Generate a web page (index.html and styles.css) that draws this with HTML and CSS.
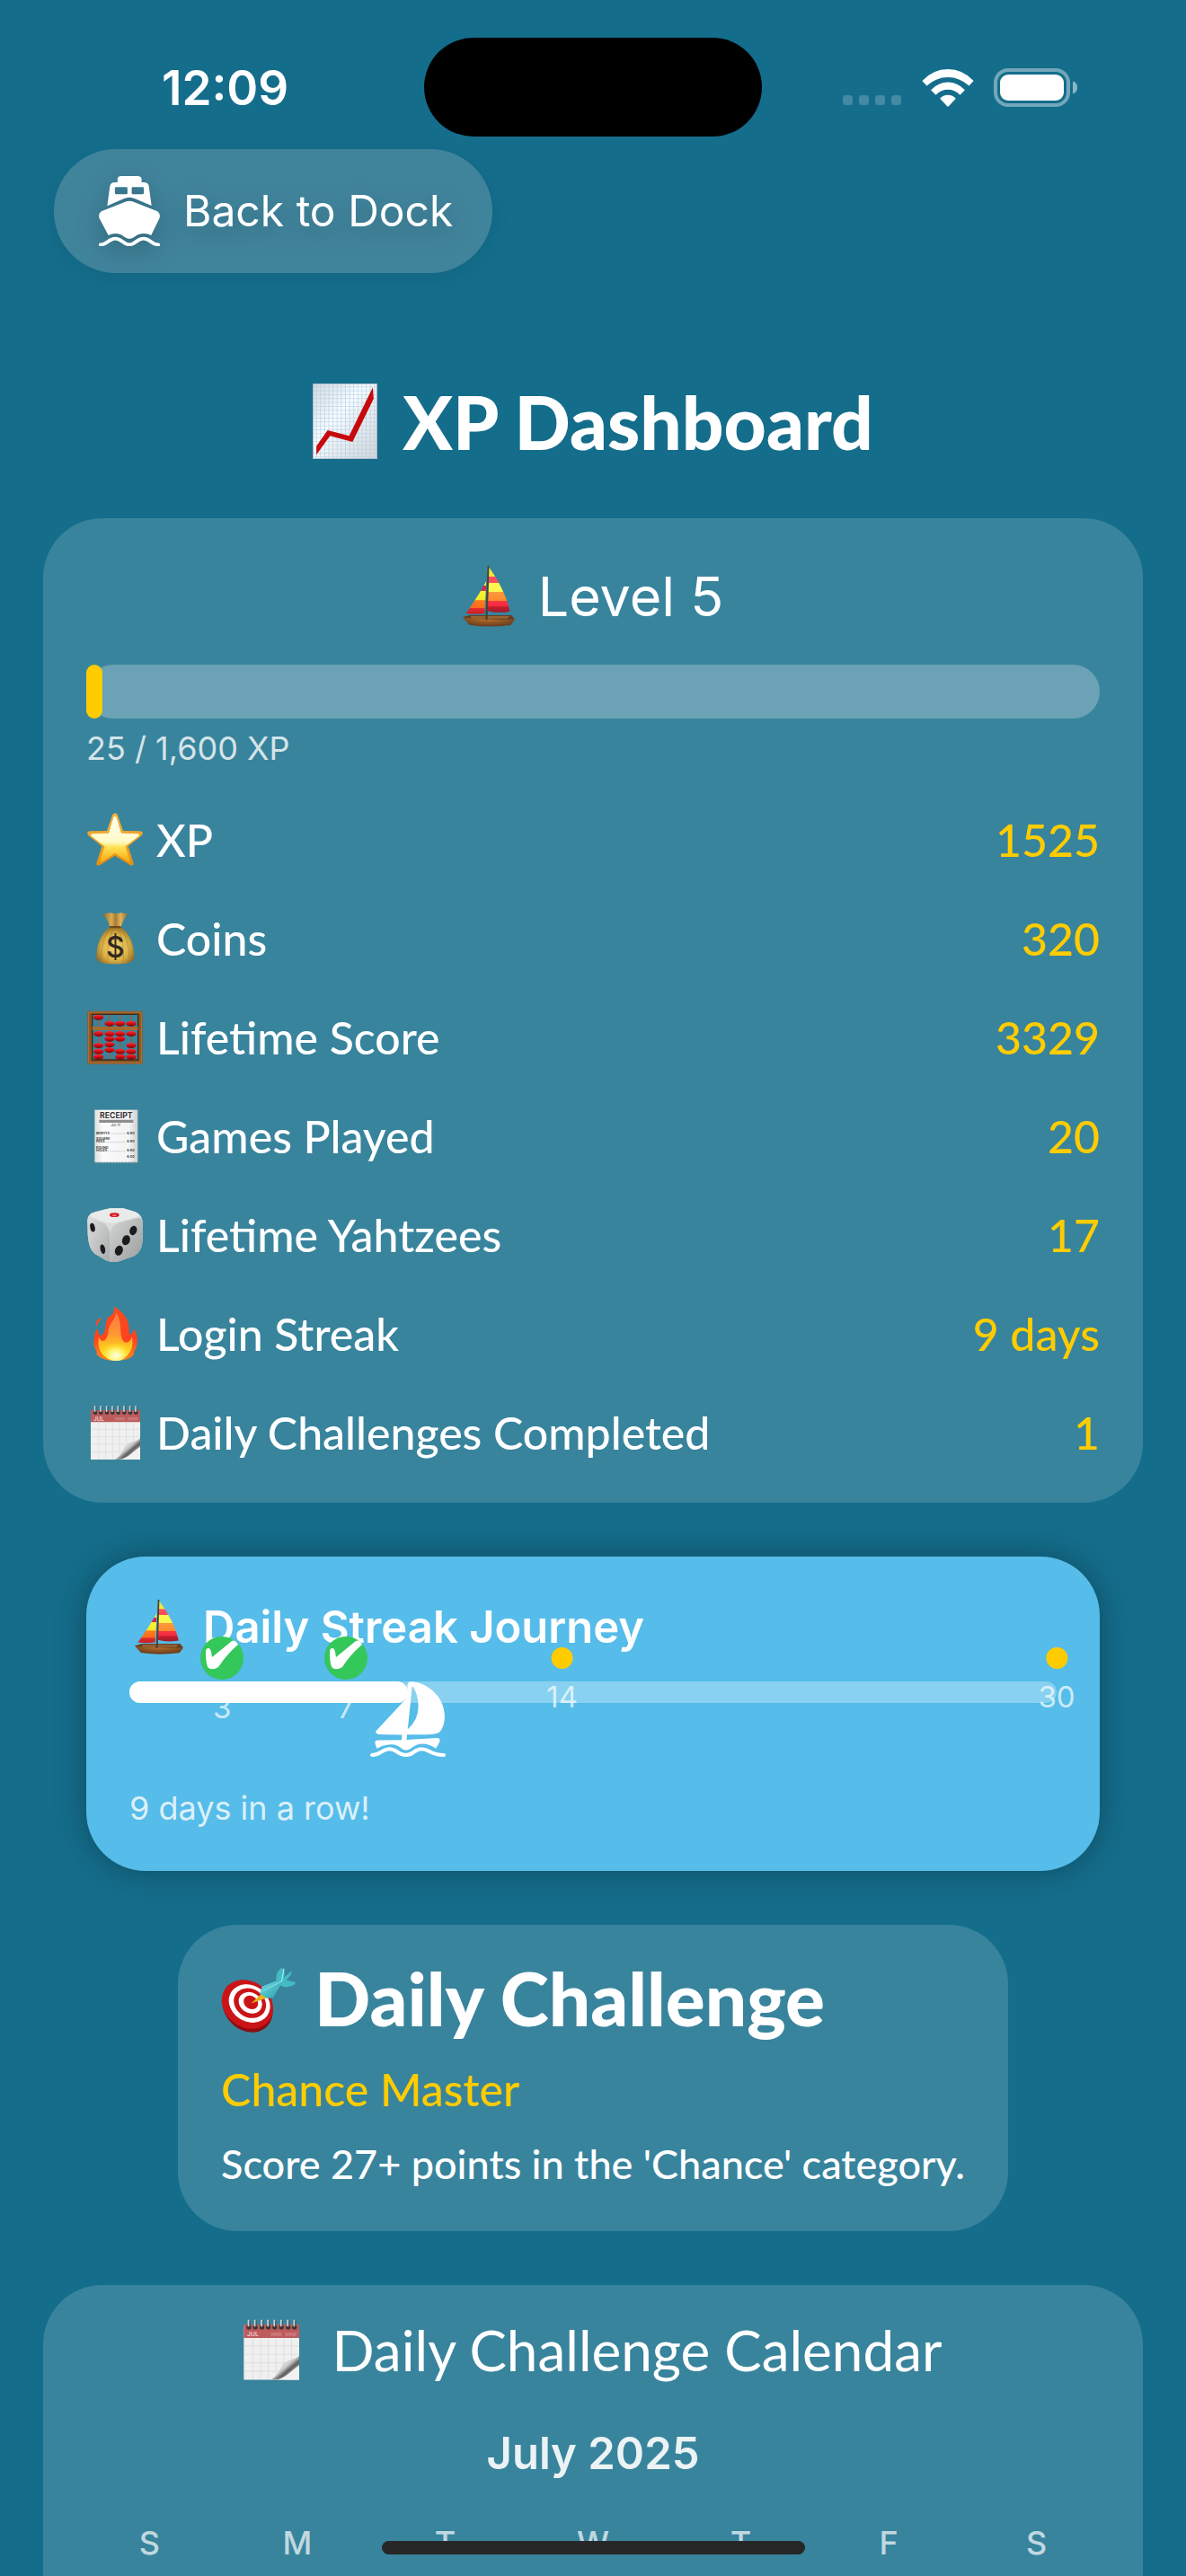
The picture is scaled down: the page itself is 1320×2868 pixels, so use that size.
FILE: index.html
```html
<!DOCTYPE html>
<html lang="en">
<head>
<meta charset="utf-8">
<meta name="viewport" content="width=device-width, initial-scale=1">
<title>XP Dashboard</title>
<link rel="stylesheet" href="styles.css">
</head>
<body>
<svg class="sprite" aria-hidden="true">
  <defs>
    <linearGradient id="sailA" x1="0" y1="0" x2="0" y2="1">
      <stop offset="0" stop-color="#f3e83a"/><stop offset=".2" stop-color="#f3e83a"/>
      <stop offset=".21" stop-color="#fb4d5c"/><stop offset=".34" stop-color="#fb4d5c"/>
      <stop offset=".35" stop-color="#fdf64c"/><stop offset=".54" stop-color="#fdf64c"/>
      <stop offset=".55" stop-color="#fd9a3b"/><stop offset=".74" stop-color="#fd8a2f"/>
      <stop offset=".75" stop-color="#fb3446"/><stop offset=".86" stop-color="#f52a3e"/>
      <stop offset=".87" stop-color="#c9202f"/><stop offset="1" stop-color="#9c1a28"/>
    </linearGradient>
    <linearGradient id="sailB" x1="0" y1="0" x2="0" y2="1">
      <stop offset="0" stop-color="#f3e83a"/><stop offset=".14" stop-color="#f3e83a"/>
      <stop offset=".15" stop-color="#d62743"/><stop offset=".29" stop-color="#d62743"/>
      <stop offset=".3" stop-color="#fbf52c"/><stop offset=".58" stop-color="#f5e92a"/>
      <stop offset=".59" stop-color="#fd7a1d"/><stop offset=".82" stop-color="#fb6a1b"/>
      <stop offset=".83" stop-color="#e22a2e"/><stop offset="1" stop-color="#c41f28"/>
    </linearGradient>
    <radialGradient id="hull" cx=".5" cy=".3" r=".6">
      <stop offset="0" stop-color="#bd7428"/><stop offset="1" stop-color="#6f4120"/>
    </radialGradient>
    <linearGradient id="star" x1="0" y1="0" x2="0" y2="1">
      <stop offset="0" stop-color="#fffef0"/><stop offset=".55" stop-color="#fffbc8"/>
      <stop offset=".68" stop-color="#ffe052"/><stop offset="1" stop-color="#f5a80f"/>
    </linearGradient>
    <linearGradient id="starEdge" x1="0" y1="0" x2="0" y2="1">
      <stop offset="0" stop-color="#f6b23c"/><stop offset="1" stop-color="#e38f12"/>
    </linearGradient>
    <radialGradient id="bag" cx=".5" cy=".55" r=".6">
      <stop offset="0" stop-color="#f3d672"/><stop offset=".6" stop-color="#d9b146"/><stop offset="1" stop-color="#8a6120"/>
    </radialGradient>
    <linearGradient id="bagTop" x1="0" y1="0" x2="1" y2="0">
      <stop offset="0" stop-color="#8f6829"/><stop offset=".35" stop-color="#d9ae55"/>
      <stop offset=".5" stop-color="#a87a33"/><stop offset=".7" stop-color="#dcb45c"/><stop offset="1" stop-color="#8f6829"/>
    </linearGradient>
    <linearGradient id="bead" x1="0" y1="0" x2="0" y2="1">
      <stop offset="0" stop-color="#f5333a"/><stop offset=".5" stop-color="#d60b12"/><stop offset="1" stop-color="#6e0508"/>
    </linearGradient>
    <linearGradient id="paper" x1="0" y1="0" x2="1" y2="0">
      <stop offset="0" stop-color="#dedede"/><stop offset=".2" stop-color="#fbfbfb"/>
      <stop offset=".8" stop-color="#f3f3f3"/><stop offset="1" stop-color="#cfcfcf"/>
    </linearGradient>
    <linearGradient id="dieL" x1="0" y1="0" x2="1" y2="1">
      <stop offset="0" stop-color="#dcdddd"/><stop offset="1" stop-color="#a9abac"/>
    </linearGradient>
    <linearGradient id="dieR" x1="0" y1="0" x2="1" y2="1">
      <stop offset="0" stop-color="#d3d5d5"/><stop offset="1" stop-color="#9b9d9e"/>
    </linearGradient>
    <linearGradient id="flame" x1="0" y1="0" x2="0" y2="1">
      <stop offset="0" stop-color="#fb4a1f"/><stop offset=".6" stop-color="#fd4420"/><stop offset="1" stop-color="#ff8a1c"/>
    </linearGradient>
    <linearGradient id="flameIn" x1="0" y1="0" x2="0" y2="1">
      <stop offset="0" stop-color="#fd7b3c"/><stop offset=".45" stop-color="#ff9634"/>
      <stop offset=".7" stop-color="#ffc41f"/><stop offset="1" stop-color="#ffe92f"/>
    </linearGradient>
    <radialGradient id="flameCore" cx=".5" cy=".75" r=".6">
      <stop offset="0" stop-color="#fffde0"/><stop offset=".5" stop-color="#fff36a"/><stop offset="1" stop-color="#ffe02a" stop-opacity="0"/>
    </radialGradient>
    <linearGradient id="curl" x1="0" y1="0" x2="1" y2="1">
      <stop offset=".25" stop-color="#f4f4f4"/><stop offset=".5" stop-color="#c9c9c9"/><stop offset=".62" stop-color="#5c5c5c"/><stop offset=".8" stop-color="#cfcfcf"/>
    </linearGradient>
    <linearGradient id="chart" x1="0" y1="0" x2="1" y2="1">
      <stop offset="0" stop-color="#d3d8de"/><stop offset=".4" stop-color="#fafcfe"/><stop offset="1" stop-color="#d3d3d5"/>
    </linearGradient>
    <pattern id="grid" width="10" height="13" patternUnits="userSpaceOnUse">
      <path d="M0 1H10M1 0V13" stroke="#a8cdea" stroke-width="2" fill="none" opacity=".75"/>
    </pattern>
    <linearGradient id="flight" x1="0" y1="0" x2="1" y2="1">
      <stop offset="0" stop-color="#76e0e6"/><stop offset="1" stop-color="#2b9fae"/>
    </linearGradient>
  </defs>
  <symbol id="boat" viewBox="478 690 126 204" preserveAspectRatio="none">
    <path d="M541 694C560 730 583 785 592 842Q562 850 538 840Z" fill="url(#sailA)"/>
    <path d="M535 740C522 775 503 815 486 849Q508 854 531 849Z" fill="url(#sailB)"/>
    <path d="M478 862L496 855H596L604 870 594 888Q540 898 494 887Z" fill="url(#hull)"/>
    <path d="M478 862L496 855H596L603 868Q540 872 478 862Z" fill="#5f3d22"/>
    <path d="M496 858H592L585 866H500Z" fill="#9a6330"/>
    <path d="M538 690H542L538 871H533Z" fill="#46423a"/>
  </symbol>
</svg>

<div class="app">
  <header class="status">
    <time class="clock">12:09</time>
    <div class="island"></div>
    <div class="signals">
      <svg class="cell" viewBox="0 0 66 12" aria-hidden="true"><g fill="#fff" opacity=".2"><rect width="11" height="11" rx="3.5"/><rect x="18" width="11" height="11" rx="3.5"/><rect x="36" width="11" height="11" rx="3.5"/><rect x="54" width="11" height="11" rx="3.5"/></g></svg>
      <svg class="wifi" viewBox="866 225 138 127" preserveAspectRatio="none" aria-hidden="true"><path fill="#fff" d="M867 264Q896 225 935 225T1003 264L991 281Q966 252 935 252T879 281ZM890 295Q910 269 935 269T980 295L967 312Q953 294 935 294T903 312ZM914 324Q922 312 935 312T956 324L937 350Q935 352 933 350Z"/></svg>
      <svg class="battery" viewBox="0 0 94 44" aria-hidden="true"><rect x="2" y="2" width="81" height="39" rx="14" fill="none" stroke="#fff" stroke-opacity=".4" stroke-width="4"/><rect x="7" y="7" width="71" height="29" rx="9" fill="#fff"/><path d="M88 14.500Q93 16 93 21.500T88 28.500Z" fill="#fff" fill-opacity=".5"/></svg>
    </div>
  </header>

  <main class="content">
    <button class="back" type="button">
      <svg class="ferry" viewBox="261 588 160 234" preserveAspectRatio="none" aria-hidden="true">
        <path fill="#fff" fill-rule="evenodd" d="M310 609V598Q311 588 320 588H362Q372 588 373 598V609H380Q391 610 392 622L399 687L356 664Q341 655 326 664L283 688L290 622Q292 609 303 609ZM307 625Q303 625 303 629V645Q303 649 307 649H332Q336 649 336 645V629Q336 625 332 625ZM351 625Q347 625 347 629V645Q347 649 351 649H375Q379 649 379 645V629Q379 625 375 625Z"/>
        <path fill="#fff" d="M333 673Q341 669 349 673L413 705Q423 712 420 728L398 786C388 778 368 776 356 790Q341 806 326 790C314 776 298 778 286 786L262 728Q259 712 269 705Z"/>
        <path fill="none" stroke="#fff" stroke-width="11" stroke-linecap="round" d="M266 817C284 817 286 797 304 797S324 817 341 817S360 797 378 797S398 817 416 817"/>
      </svg>
      <span>Back to Dock</span>
    </button>

    <h1 class="title">
      <svg class="title-icon" viewBox="92 81 156 252" preserveAspectRatio="none" aria-hidden="true">
        <rect x="92" y="81" width="156" height="252" fill="url(#chart)"/><rect x="92" y="81" width="156" height="252" fill="url(#grid)"/>
        <rect x="93" y="82" width="154" height="250" fill="none" stroke="#aab4bd" stroke-width="2"/>
        <path d="M101 290L128 237L180 256L237 94L239 132L188 276L134 256L101 319Z" fill="#c60a0c"/>
      </svg>
      <span>XP Dashboard</span>
    </h1>

    <section class="card stats">
      <h2 class="level"><svg class="level-icon" aria-hidden="true"><use href="#boat"/></svg><span>Level 5</span></h2>
      <div class="xp-bar" role="progressbar" aria-label="XP" aria-valuemin="0" aria-valuemax="1600" aria-valuenow="25"><div class="xp-fill" style="width: 1.5625%"></div></div>
      <p class="caption">25 / 1,600 XP</p>
      <dl class="rows">
        <div class="row">
          <dt><svg class="emoji" viewBox="0 0 192 180" aria-hidden="true"><path d="M88 6Q96-5 104 6L123 60 180 61Q194 63 185 76L140 112 158 168Q159 180 147 175L96 143 45 175Q33 180 34 168L52 112 7 76Q-2 63 12 61L69 60Z" fill="url(#starEdge)"/><path d="M91 16Q96 8 101 16L117 68 172 70Q181 72 174 79L131 112 146 160Q145 167 138 163L96 134 54 163Q47 167 46 160L61 112 18 79Q11 72 20 70L75 68Z" fill="url(#star)"/></svg>XP</dt>
          <dd>1525</dd>
        </div>
        <div class="row">
          <dt><svg class="emoji" viewBox="18 44 192 180" aria-hidden="true"><path d="M98 96C76 108 54 140 52 190C50 214 74 219 115 219S180 214 178 190C176 140 154 108 132 96Z" fill="url(#bag)"/><path d="M98 100C80 122 70 150 68 200M132 100C150 122 160 150 162 200M108 100Q86 150 90 210M124 100Q146 150 142 210" fill="none" stroke="#a57c2c" stroke-width="3" opacity=".55"/><path d="M73 52L96 48Q116 52 134 48L158 52Q142 66 134 96H97Q90 68 73 52Z" fill="url(#bagTop)"/><rect x="96" y="92" width="38" height="7" rx="3" fill="#6e4a1a"/><text x="115" y="196" text-anchor="middle" font-family="Inter, sans-serif" font-size="96" font-weight="500" fill="#33291e">$</text></svg>Coins</dt>
          <dd>320</dd>
        </div>
        <div class="row">
          <dt><svg class="emoji" viewBox="20 376 192 180" aria-hidden="true"><path d="M61 388V545M98 388V545M133 388V545M170 388V545" stroke="#a25a3a" stroke-width="4"/><path d="M24 378H208V555H24ZM40 389V541H193V389Z" fill="#8d5624" fill-rule="evenodd"/><path d="M28 382H204V551H28Z" fill="none" stroke="#b0763a" stroke-width="3"/><path d="M40 389H193V541H40Z" fill="none" stroke="#3f2a18" stroke-width="4"/><path d="M40 430H193V442H40Z" fill="#a56c30"/><g fill="url(#bead)"><ellipse cx="61" cy="399" rx="17" ry="9"/><ellipse cx="98" cy="420" rx="17" ry="9"/><ellipse cx="133" cy="420" rx="17" ry="9"/><ellipse cx="170" cy="420" rx="17" ry="9"/><ellipse cx="61" cy="454" rx="17" ry="9"/><ellipse cx="98" cy="454" rx="17" ry="9"/><ellipse cx="133" cy="454" rx="17" ry="9"/><ellipse cx="170" cy="454" rx="17" ry="9"/><ellipse cx="98" cy="471" rx="17" ry="9"/><ellipse cx="133" cy="471" rx="17" ry="9"/><ellipse cx="61" cy="493" rx="17" ry="9"/><ellipse cx="98" cy="490" rx="17" ry="9"/><ellipse cx="170" cy="493" rx="17" ry="9"/><ellipse cx="98" cy="508" rx="17" ry="9"/><ellipse cx="61" cy="513" rx="17" ry="9"/><ellipse cx="133" cy="513" rx="17" ry="9"/><ellipse cx="170" cy="513" rx="17" ry="9"/><ellipse cx="61" cy="531" rx="17" ry="9"/><ellipse cx="133" cy="531" rx="17" ry="9"/><ellipse cx="170" cy="531" rx="17" ry="9"/></g></svg>Lifetime Score</dt>
          <dd>3329</dd>
        </div>
        <div class="row">
          <dt><svg class="emoji" viewBox="20 31 192 180" aria-hidden="true"><rect x="48" y="33" width="144" height="176" fill="url(#paper)"/><text x="120" y="62" text-anchor="middle" font-family="Inter, sans-serif" font-size="26" font-weight="700" fill="#333">RECEIPT</text><path d="M63 66H177V76H63Z" fill="#8d8d8d"/><text x="118" y="89" text-anchor="middle" font-family="Inter, sans-serif" font-size="10" font-weight="600" fill="#555">JUL 17</text><g font-family="Inter, sans-serif" font-size="11" font-weight="700" fill="#444"><text x="53" y="114">MISFITS</text><text x="156" y="114">6.90</text><text x="53" y="132">SQUARE</text><text x="53" y="143">PEGS</text><text x="156" y="143">6.90</text><text x="53" y="162">ROUND</text><text x="53" y="173">HOLES</text><text x="156" y="173">6.90</text><text x="156" y="194">6.00</text></g><path d="M104 112H152M88 141H152M92 171H152" stroke="#aaa" stroke-width="2" stroke-dasharray="3 2"/><path d="M48 208H192" stroke="#777" stroke-width="2" stroke-dasharray="6 4"/></svg>Games Played</dt>
          <dd>20</dd>
        </div>
        <div class="row">
          <dt><svg class="emoji" viewBox="20 362 192 180" aria-hidden="true"><path d="M24 400Q26 380 50 374L100 363H144L184 375Q206 384 208 408V470Q206 508 180 522L130 540Q104 545 84 536L48 514Q28 500 25 450Z" fill="#d9dbdb"/><path d="M24 400Q30 394 60 404Q94 412 98 450V540Q88 538 48 514Q28 500 25 450Z" fill="url(#dieL)"/><path d="M98 450Q100 420 134 410L190 396Q208 392 208 408V470Q206 508 180 522L130 540Q112 544 98 541Z" fill="url(#dieR)"/><path d="M30 388Q40 376 100 363H144L184 375Q200 384 196 390Q150 404 110 412Q90 414 60 402Z" fill="#e9ebeb"/><ellipse cx="114" cy="385" rx="16" ry="7" fill="#d31a1c"/><ellipse cx="114" cy="387" rx="7" ry="3" fill="#f77"/><g fill="#1c1c1d"><ellipse cx="41" cy="427" rx="8" ry="15" transform="rotate(-12 41 427)"/><ellipse cx="75" cy="499" rx="8" ry="16" transform="rotate(-12 75 499)"/><ellipse cx="177" cy="437" rx="12" ry="16" transform="rotate(20 177 437)"/><ellipse cx="153" cy="469" rx="13" ry="17" transform="rotate(20 153 469)"/><ellipse cx="129" cy="504" rx="13" ry="17" transform="rotate(20 129 504)"/></g></svg>Lifetime Yahtzees</dt>
          <dd>17</dd>
        </div>
        <div class="row">
          <dt><svg class="emoji" viewBox="20 693 192 180" aria-hidden="true"><path d="M113 693C142 708 164 735 163 768C162 788 172 796 179 765C190 780 194 805 188 824C186 836 178 844 176 848L182 847C176 864 148 873 118 873S62 866 52 847L58 846C46 832 42 812 48 788Q50 772 59 765C60 790 72 796 80 778C88 760 80 738 98 724Q114 722 113 693Z" fill="url(#flame)"/><path d="M69 727Q66 742 60 748Q56 752 54 760Q48 738 69 727Z" fill="#fb4a1f"/><path d="M119 712C142 740 128 786 144 808C158 822 172 800 172 792C182 832 160 870 118 872C76 870 54 834 62 794C76 822 92 800 94 772C98 744 118 738 119 712Z" fill="url(#flameIn)"/><ellipse cx="119" cy="838" rx="42" ry="36" fill="url(#flameCore)"/></svg>Login Streak</dt>
          <dd>9 days</dd>
        </div>
        <div class="row">
          <dt><svg class="emoji" viewBox="18 1023 192 180" aria-hidden="true">
            <g id="calendar">
              <path d="M33 1038H198V1203H33Z" fill="#f0f0f0"/>
              <path d="M60 1078V1202M83 1078V1202M106 1078V1202M129 1078V1190M152 1078V1172M175 1078V1150M33 1102H198M33 1127H198M33 1152H170M33 1177H140" stroke="#dfe0e3" stroke-width="3"/>
              <path d="M33 1038H198V1078H33Z" fill="#bd5b5d"/>
              <path d="M113 1062H146V1072H113ZM156 1062H190V1072H156Z" fill="#c87577"/>
              <text x="43" y="1074" font-family="Inter, sans-serif" font-size="18" font-weight="600" fill="#edd0d0">JUL</text>
              <path d="M198 1130C190 1144 158 1142 148 1158C140 1172 136 1190 112 1203H198Z" fill="url(#curl)"/>
              <path d="M198 1160V1203H124C160 1200 176 1172 198 1160Z" fill="#f2f2f2"/>
              <g fill="#3b3636"><circle cx="48" cy="1046" r="7"/><circle cx="67" cy="1046" r="7"/><circle cx="87" cy="1046" r="7"/><circle cx="106" cy="1046" r="7"/><circle cx="125" cy="1046" r="7"/><circle cx="145" cy="1046" r="7"/><circle cx="165" cy="1046" r="7"/><circle cx="184" cy="1046" r="7"/></g>
              <path d="M47 1024V1044M66 1024V1044M86 1024V1044M105 1024V1044M124 1024V1044M144 1024V1044M164 1024V1044M183 1024V1044" stroke="#c8d3d8" stroke-width="5"/>
              <path d="M51 1026V1044M70 1026V1044M90 1026V1044M109 1026V1044M128 1026V1044M148 1026V1044M168 1026V1044M187 1026V1044" stroke="#4b5357" stroke-width="3"/>
            </g>
          </svg>Daily Challenges Completed</dt>
          <dd>1</dd>
        </div>
      </dl>
    </section>

    <section class="streak">
      <h2 class="streak-title"><svg class="streak-icon" aria-hidden="true"><use href="#boat"/></svg><span>Daily Streak Journey</span></h2>
      <div class="track">
        <div class="marker done" style="left: 10%"><svg class="tick" viewBox="0 0 48 48" aria-hidden="true"><circle cx="24" cy="24" r="24" fill="#34c759"/><path d="M6 17Q6 13 9 13Q11 13 12 17L13 23L35 5Q39 3 42 9Q29 20 20 34Q14 38 9 35Q6 32 6 17Z" fill="#fff"/></svg><span>3</span></div>
        <div class="marker done" style="left: 23.333%"><svg class="tick" viewBox="0 0 48 48" aria-hidden="true"><circle cx="24" cy="24" r="24" fill="#34c759"/><path d="M6 17Q6 13 9 13Q11 13 12 17L13 23L35 5Q39 3 42 9Q29 20 20 34Q14 38 9 35Q6 32 6 17Z" fill="#fff"/></svg><span>7</span></div>
        <div class="marker" style="left: 46.667%"><i class="dot"></i><span>14</span></div>
        <div class="marker" style="left: 100%"><i class="dot"></i><span>30</span></div>
        <div class="track-fill" style="width: 30%"></div>
        <svg class="sailboat" style="left: 30%" viewBox="902 457 235 251" preserveAspectRatio="none" aria-hidden="true">
          <path fill="#fff" fill-rule="evenodd" d="M1018 468Q1020 456 1034 458C1090 466 1134 514 1134 574C1134 600 1124 622 1116 627Q1106 634 1060 634H1017L1015 651L1110 645Q1121 646 1119 656Q1114 670 1106 680C1090 666 1066 660 1048 668Q1036 674 1026 682Q1013 690 1000 680C990 670 976 664 958 668Q940 670 923 680Q918 668 917 660Q917 654 926 653L1000 652L1001 635L928 633Q917 630 920 622L1012 517Q1018 500 1018 468ZM1033 471L1019 616Q1052 585 1052 540Q1052 500 1033 471Z"/>
          <path fill="none" stroke="#fff" stroke-width="12" stroke-linecap="round" d="M908 702C936 702 938 682 962 682S988 702 1013 702S1038 682 1062 682S1090 702 1131 702"/>
        </svg>
      </div>
      <p class="caption">9 days in a row!</p>
    </section>

    <section class="card challenge">
      <h2 class="challenge-title">
        <svg class="target" viewBox="101 184 138 215" preserveAspectRatio="none" aria-hidden="true">
          <g transform="rotate(-8 148 310)"><ellipse cx="149" cy="314" rx="45" ry="85" fill="#8e0c10"/><ellipse cx="150" cy="305" rx="46" ry="82" fill="#cb1418"/><ellipse cx="154" cy="303" rx="37" ry="64" fill="#fff"/><ellipse cx="155" cy="302" rx="29" ry="50" fill="#cb1418"/><ellipse cx="156" cy="301" rx="21" ry="36" fill="#fff"/><ellipse cx="157" cy="300" rx="13" ry="23" fill="#cb1418"/></g>
          <path d="M156 302L176 268L188 282Z" fill="#e8b219"/><path d="M172 270L176 246L206 224L210 240L196 284L184 284Z" fill="url(#flight)"/><path d="M202 228Q200 196 212 184Q220 188 216 216L230 194Q232 206 220 224L238 232Q236 246 218 248L206 240Z" fill="#45b9c4"/><path d="M176 262L212 228L216 186" fill="none" stroke="#93edf0" stroke-width="2"/>
        </svg>
        <span>Daily Challenge</span>
      </h2>
      <p class="challenge-name">Chance Master</p>
      <p class="challenge-text">Score 27+ points in the 'Chance' category.</p>
    </section>

    <section class="card calendar">
      <h2 class="calendar-title"><svg class="calendar-icon" viewBox="32 1023 166 180" aria-hidden="true"><use href="#calendar"/></svg><span>Daily Challenge Calendar</span></h2>
      <table class="month">
        <caption>July 2025</caption>
        <thead><tr><th scope="col">S</th><th scope="col">M</th><th scope="col">T</th><th scope="col">W</th><th scope="col">T</th><th scope="col">F</th><th scope="col">S</th></tr></thead>
      </table>
    </section>
  </main>
  <div class="home-indicator"></div>
</div>
</body>
</html>
```
FILE: styles.css
```css
:root {
  --sea: #146d8b;
  --card: #38849d;
  --gold: #ffcc00;
  --system: Inter, "Liberation Sans", sans-serif;
  --display: Lato, "Open Sans", sans-serif;
}

* { box-sizing: border-box; }

body {
  margin: 0;
  background: var(--sea);
  color: #fff;
  font-family: var(--system);
}

h1, h2, p, dl, dd { margin: 0; }

svg { display: block; flex: none; }

.sprite { position: absolute; width: 0; height: 0; }

.app {
  position: relative;
  display: flex;
  flex-direction: column;
  min-height: 100vh;
}

/* Status bar */
.status {
  position: relative;
  display: flex;
  justify-content: space-between;
  align-items: center;
  padding: 62px 120px 32px 180px;
}

.clock {
  font-size: 53px;
  font-weight: 600;
  line-height: 72px;
}

.island {
  position: absolute;
  top: 42px;
  left: 50%;
  width: 376px;
  height: 110px;
  margin-left: -188px;
  border-radius: 55px;
  background: #000;
}

.signals { display: flex; align-items: center; }
.cell { width: 66px; height: 12px; margin-top: 28px; }
.wifi { width: 58px; height: 42px; margin: 0 22px; }
.battery { width: 94px; height: 44px; }

.content {
  flex: 1;
  display: flex;
  flex-direction: column;
  padding: 0 48px;
}

.back {
  align-self: flex-start;
  display: flex;
  align-items: center;
  gap: 26px;
  height: 138px;
  margin-left: 12px;
  padding: 0 44px 0 50px;
  border: 0;
  border-radius: 69px;
  background: #40849c;
  box-shadow: 0 6px 24px rgba(0, 0, 0, .06);
  color: #fff;
  font: 400 48px/60px var(--system);
}

.back > * { filter: drop-shadow(0 8px 14px rgba(0, 0, 0, .22)); }
.ferry { width: 68px; height: 78px; }

.title {
  display: flex;
  justify-content: center;
  align-items: center;
  gap: 28px;
  margin: 123px 0 66px;
  font: 900 82px/84px var(--display);
}

.title-icon { width: 72px; height: 84px; }

.card {
  border-radius: 66px;
  background: var(--card);
}

/* Level and totals */
.stats { padding: 48px; }

.level {
  display: flex;
  justify-content: center;
  align-items: center;
  gap: 26px;
  margin-bottom: 37px;
  font-size: 61px;
  font-weight: 400;
  line-height: 78px;
}

.level-icon { width: 58px; height: 68px; }

.xp-bar {
  height: 60px;
  border-radius: 30px;
  background: #6ba2b6;
}

.xp-fill {
  height: 100%;
  border-radius: 9px;
  background: var(--gold);
}

.caption {
  margin-top: 11px;
  color: rgba(255, 255, 255, .8);
  font-size: 36px;
  line-height: 44px;
}

.rows {
  display: flex;
  flex-direction: column;
  gap: 50px;
  margin-top: 50px;
  font: 500 50px/60px var(--display);
}

.row { display: flex; justify-content: space-between; }
.row dt { display: flex; align-items: center; gap: 14px; }
.row dd { color: var(--gold); }
.emoji { width: 64px; height: 60px; }

/* Streak journey */
.streak {
  margin: 60px 48px 0;
  padding: 48px;
  border-radius: 66px;
  background: #56bce9;
  box-shadow: 0 0 36px rgba(0, 0, 0, .3);
}

.streak-title {
  display: flex;
  align-items: center;
  gap: 22px;
  padding-left: 6px;
  font-size: 49px;
  font-weight: 600;
  line-height: 61px;
}

.streak-icon { width: 54px; height: 61px; }

.track {
  position: relative;
  height: 24px;
  margin: 30px 0 95px;
  border-radius: 12px;
  background: #88d1f0;
}

.track-fill {
  position: relative;
  height: 100%;
  border-radius: 12px;
  background: #fff;
}

.marker {
  position: absolute;
  top: -38px;
  display: flex;
  flex-direction: column;
  align-items: center;
  gap: 12px;
  transform: translateX(-50%);
  color: rgba(255, 255, 255, .7);
  font-size: 33px;
  line-height: 38px;
}

.marker.done { top: -50px; }
.tick { width: 48px; height: 48px; }

.dot {
  width: 24px;
  height: 24px;
  border-radius: 50%;
  background: var(--gold);
}

.sailboat {
  position: absolute;
  top: 0;
  width: 84px;
  height: 84px;
  margin-left: -42px;
}

/* Daily challenge */
.challenge {
  align-self: center;
  margin-top: 60px;
  padding: 48px;
  font-family: var(--display);
}

.challenge-title {
  display: flex;
  align-items: flex-start;
  gap: 20px;
  font-size: 82px;
  font-weight: 900;
  line-height: 66px;
}

.target { width: 84px; height: 72px; }

.challenge-name {
  margin-top: 33px;
  color: var(--gold);
  font-size: 50px;
  font-weight: 500;
  line-height: 60px;
}

.challenge-text {
  margin-top: 26px;
  font-size: 45px;
  font-weight: 500;
  line-height: 54px;
}

/* Calendar */
.calendar {
  flex: 1;
  margin-top: 60px;
  padding: 36px 36px 0;
  border-radius: 66px 66px 0 0;
}

.calendar-title {
  display: flex;
  justify-content: center;
  align-items: center;
  gap: 36px;
  font: 400 62px/72px var(--display);
}

.calendar-icon { width: 62px; height: 68px; }

.month {
  width: 100%;
  margin-top: 50px;
  border-collapse: collapse;
  table-layout: fixed;
}

.month caption {
  padding-bottom: 47px;
  color: rgba(255, 255, 255, .9);
  font-size: 49px;
  font-weight: 600;
  line-height: 60px;
}

.month th {
  padding: 0;
  color: rgba(255, 255, 255, .7);
  font-size: 36px;
  font-weight: 500;
  line-height: 44px;
}

.home-indicator {
  position: fixed;
  bottom: 24px;
  left: 50%;
  width: 471px;
  height: 15px;
  margin-left: -235px;
  border-radius: 8px;
  background: #272727;
}
```
